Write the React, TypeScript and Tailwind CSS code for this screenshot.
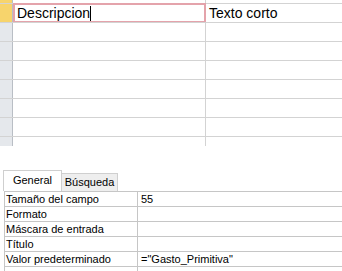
const gridRows = [0, 1, 2, 3, 4, 5, 6, 7];

const props = [
  { label: "Tamaño del campo", value: "55" },
  { label: "Formato", value: "" },
  { label: "Máscara de entrada", value: "" },
  { label: "Título", value: "" },
  { label: "Valor predeterminado", value: '="Gasto_Primitiva"' },
  { label: "", value: "" },
];

export default function App() {
  return (
    <div className="w-[342px] h-[271px] overflow-hidden bg-white text-black" style={{ fontFamily: '"Liberation Sans", Arial, sans-serif' }}>
      {/* Table design grid */}
      <div className="flex flex-col h-[146px] overflow-hidden">
        <div className="flex h-[3px] shrink-0">
          <div className="w-[13px] bg-[#f7d46c] border-r border-[#b9bec5]" />
          <div className="w-[193px] border-r border-[#d3d3d3]" />
          <div className="flex-1" />
        </div>
        {gridRows.map((i) => (
          <div key={i} className="flex h-[19px] shrink-0 border-t border-[#d3d3d3]">
            <div className={`w-[13px] shrink-0 border-r border-[#b9bec5] ${i === 0 ? "bg-[#f7d46c]" : "bg-[#e5e8ec]"}`} />
            {i === 0 ? (
              <div className="w-[193px] shrink-0 -mt-px h-[20px] border-2 border-[#e4a3ab] flex items-center pl-[2px] text-[14px] leading-none">
                Descripcion<span className="inline-block w-px h-[15px] bg-black" />
              </div>
            ) : (
              <div className="w-[193px] shrink-0 border-r border-[#d3d3d3]" />
            )}
            <div className="flex-1 flex items-center pl-[3px] text-[14px] leading-none">{i === 0 ? "Texto corto" : ""}</div>
          </div>
        ))}
      </div>

      {/* Properties */}
      <div className="mt-[24px] pl-[3px] text-[11px] leading-none">
        <div className="flex items-end h-[21px]">
          <div className="w-[59px] h-[21px] bg-white border border-b-0 border-[#cfcfcf] flex items-center justify-center pb-[2px]">General</div>
          <div className="w-[56px] h-[18px] bg-[#eeeeee] border border-l-0 border-b-0 border-[#cfcfcf] flex items-center justify-center">Búsqueda</div>
        </div>
        <div className="ml-px border-t border-l border-[#c6c6c6]">
          {props.map((p, i) => (
            <div key={i} className="flex h-[15px] border-b border-[#c6c6c6]">
              <div className="w-[133px] shrink-0 border-r border-[#c6c6c6] flex items-center pl-[1px]">{p.label}</div>
              <div className="flex-1 flex items-center pl-[3px]">{p.value}</div>
            </div>
          ))}
        </div>
      </div>
    </div>
  );
}
